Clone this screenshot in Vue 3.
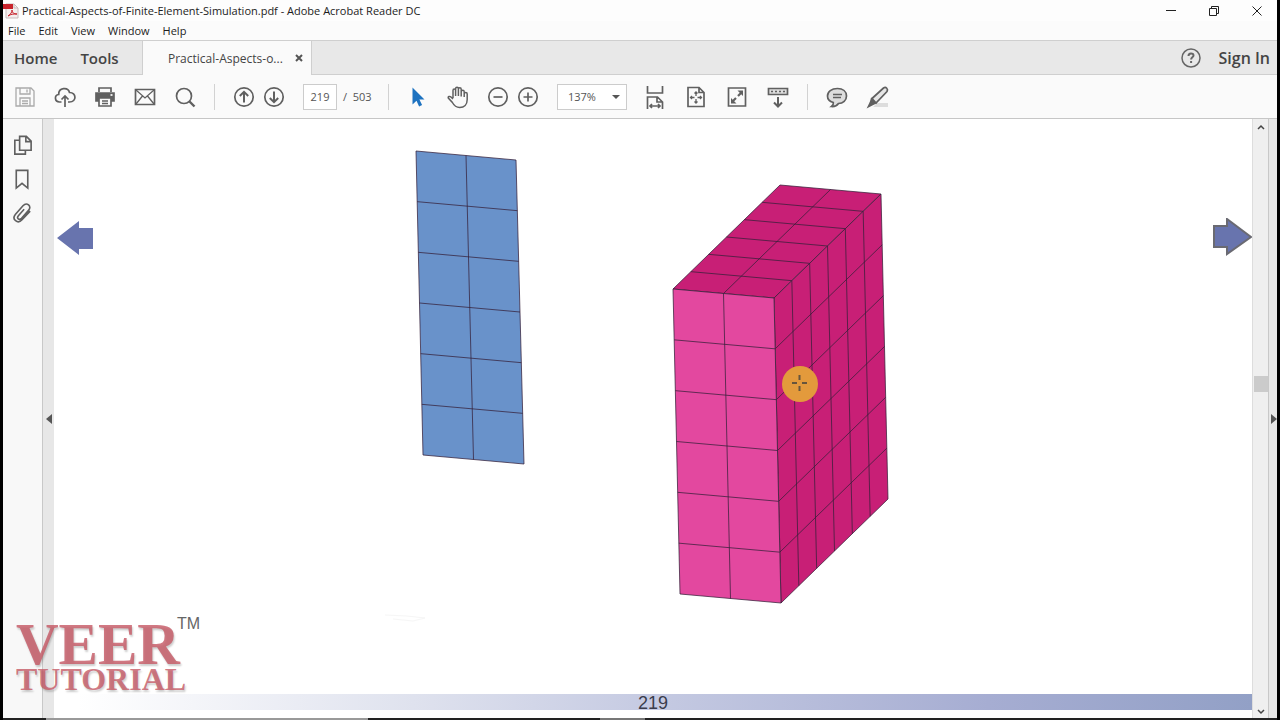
<script setup>
import { ref } from "vue";

const menus = ["File", "Edit", "View", "Window", "Help"];
const page = ref("219");
const zoom = ref("137%");

// corners go clockwise from the top left one
const faces = [
  { name: "plate", points: [[416, 151], [516, 160], [524, 464], [423, 455]], cols: 2, rows: 6 },
  { name: "top", points: [[780, 185], [881, 194], [774, 298], [673, 289]], cols: 2, rows: 6 },
  { name: "side", points: [[774, 298], [881, 194], [888, 499], [781, 603]], cols: 6, rows: 6 },
  { name: "front", points: [[673, 289], [774, 298], [781, 603], [680, 594]], cols: 2, rows: 6 },
];

function between(a, b, t) {
  return [a[0] + (b[0] - a[0]) * t, a[1] + (b[1] - a[1]) * t];
}

function meshPath(face) {
  const [tl, tr, br, bl] = face.points;
  let d = "";
  for (let i = 1; i < face.cols; i++) {
    const t = i / face.cols;
    d += `M${between(tl, tr, t)}L${between(bl, br, t)}`;
  }
  for (let i = 1; i < face.rows; i++) {
    const t = i / face.rows;
    d += `M${between(tl, bl, t)}L${between(tr, br, t)}`;
  }
  return d;
}
</script>

<template>
  <div class="window">
    <header class="title-bar">
      <svg class="app-icon" width="16" height="18" viewBox="0 0 16 18">
        <path d="M3 2h8l4 4v10H3z" fill="#f4eeee" stroke="#c9bcbc" />
        <path d="M11 2v4h4" fill="none" stroke="#c9bcbc" />
        <rect x="0" y="2" width="10" height="5" fill="#c8232c" />
        <path d="M5 14c3-2 4-4 4-6 0 3 2 4 5 4-4 0-6 0-9 2z" fill="none" stroke="#c8232c" />
      </svg>
      <h1>Practical-Aspects-of-Finite-Element-Simulation.pdf - Adobe Acrobat Reader DC</h1>
      <div class="window-buttons">
        <button aria-label="Minimize">
          <svg width="12" height="12" viewBox="0 0 12 12"><path d="M1 5.500h10" /></svg>
        </button>
        <button aria-label="Restore">
          <svg width="12" height="12" viewBox="0 0 12 12"><path d="M1.500 3.500h7v7h-7zM3.500 3.500v-2h7v7h-2" /></svg>
        </button>
        <button aria-label="Close">
          <svg width="12" height="12" viewBox="0 0 12 12"><path d="M1.500 1.500l9 9M10.500 1.500l-9 9" /></svg>
        </button>
      </div>
    </header>

    <nav class="menu-bar">
      <button v-for="menu in menus" :key="menu">{{ menu }}</button>
    </nav>

    <div class="tabs">
      <div class="main-tabs">
        <button>Home</button>
        <button>Tools</button>
      </div>
      <div class="file-tab">
        <span>Practical-Aspects-o...</span>
        <button aria-label="Close tab">
          <svg width="8" height="8" viewBox="0 0 8 8"><path d="M1 1l6 6M7 1l-6 6" /></svg>
        </button>
      </div>
      <div class="account">
        <button class="help" aria-label="Help">
          <svg width="20" height="20" viewBox="0 0 20 20">
            <circle cx="10" cy="10" r="9" />
            <path d="M7.500 8c0-3.500 5-3.300 5-.5 0 1.900-2.400 1.800-2.400 4M10.100 13v2" stroke-width="2" />
          </svg>
        </button>
        <button class="sign-in">Sign In</button>
      </div>
    </div>

    <div class="toolbar">
      <div class="group">
        <button class="disabled" aria-label="Save">
          <svg viewBox="0 0 24 24">
            <path d="M3 3h15l3 3v15H3z" /><path d="M7 3v6h10V3M14 4.500v3M7 21v-8h10v8M9 16h6M9 18.500h6" />
          </svg>
        </button>
        <button aria-label="Upload">
          <svg viewBox="0 0 24 24">
            <path d="M8.500 17H6.500c-5 0-5.500-7-.8-7.500C5.500 2.500 15 1.500 16.500 7.500c7-.2 7.500 9.500 0 9.500H15" />
            <path d="M12 22V11M8.500 14.500L12 11l3.500 3.500" />
          </svg>
        </button>
        <button aria-label="Print">
          <svg viewBox="0 0 24 24">
            <path d="M6 7V3h12v4" />
            <path d="M3 8h18v8h-3v-3H6v3H3z" fill="#606060" />
            <path d="M6 13h12v8H6z" fill="#fafafa" /><path d="M9 16h6M9 18.500h6" stroke-width="1.300" />
            <path d="M17.500 10h2" stroke="#fff" />
          </svg>
        </button>
        <button aria-label="Email">
          <svg viewBox="0 0 24 24">
            <path d="M2.500 4.500h19v15h-19z" />
            <path d="M3 5l9 8 9-8M3 19l6.500-8M21 19l-6.500-8" stroke-width="1.300" />
          </svg>
        </button>
        <button aria-label="Search">
          <svg viewBox="0 0 24 24"><circle cx="11" cy="11" r="7.500" /><path d="M16.500 16.500l5 5" stroke-width="2.400" /></svg>
        </button>
      </div>
      <span class="divider"></span>
      <div class="group tight">
        <button aria-label="Previous page">
          <svg viewBox="0 0 24 24"><circle cx="12" cy="12" r="9.200" /><path d="M12 17.500V7M7.800 11L12 6.800l4.200 4.200" stroke-width="2" /></svg>
        </button>
        <button aria-label="Next page">
          <svg viewBox="0 0 24 24"><circle cx="12" cy="12" r="9.200" /><path d="M12 6.500V17M7.800 13l4.200 4.200 4.200-4.200" stroke-width="2" /></svg>
        </button>
      </div>
      <label class="page-field">
        <input v-model="page" type="text" aria-label="Page number" />
        <span>/&nbsp; 503</span>
      </label>
      <span class="divider"></span>
      <div class="group">
        <button aria-label="Select">
          <svg viewBox="0 0 24 24"><path d="M6.500 2.500v17l4-3.800 2.600 5.800 3-1.400-2.700-5.600h5.100z" class="pointer" /></svg>
        </button>
        <button aria-label="Pan">
          <svg viewBox="0 0 24 24">
            <path d="M7 13V5.500c0-2 2.600-2 2.600 0V11M9.600 11V3.700c0-2 2.800-2 2.800 0V11M12.400 11V4.300c0-2 2.800-2 2.800 0V11.500M15.200 11.500V6.700c0-2 3-2 3 0V12M18.200 9c0-2 3-2 3 0v5.500c0 5-3 8-7.500 8-4 0-5.800-2.200-7.300-5L2.300 13c-.6-1.800 1.700-2 2.700-1L7 14" stroke-width="1.500" />
          </svg>
        </button>
      </div>
      <div class="group tight zoom-buttons">
        <button aria-label="Zoom out">
          <svg viewBox="0 0 24 24"><circle cx="12" cy="12" r="9.200" /><path d="M7.500 12h9" /></svg>
        </button>
        <button aria-label="Zoom in">
          <svg viewBox="0 0 24 24"><circle cx="12" cy="12" r="9.200" /><path d="M7.500 12h9M12 7.500v9" /></svg>
        </button>
      </div>
      <div class="zoom-field">
        <select v-model="zoom" aria-label="Zoom level">
          <option>100%</option>
          <option>137%</option>
          <option>150%</option>
        </select>
      </div>
      <div class="group wide">
        <button aria-label="Fit width">
          <svg viewBox="0 0 24 24">
            <path d="M4.500 1v7h15V1M4.500 24V12h10l5 5v7M14 12v5h5M7 21h10M9 19l-2 2 2 2M15 19l2 2-2 2" />
          </svg>
        </button>
        <button aria-label="Fit page">
          <svg viewBox="0 0 24 24">
            <path d="M4 2.500h11l5 5v14H4zM15 2.500v5h5" />
            <path d="M12 7v4M12 14v4M6.500 12.500h4M13.500 12.500h4M10.500 8.500L12 7l1.500 1.500M10.500 16.500L12 18l1.500-1.500M8 11l-1.500 1.500L8 14M16 11l1.500 1.500L16 14" stroke-width="1.300" />
          </svg>
        </button>
        <button aria-label="Full screen">
          <svg viewBox="0 0 24 24">
            <path d="M3.500 3h17v18h-17z" /><path d="M13 11l4-4M11 13l-4 4" stroke-width="2.200" />
            <path d="M12.500 5.500H18V11zM6 13v5.500h5.500z" fill="#606060" stroke="none" />
          </svg>
        </button>
        <button aria-label="Read mode">
          <svg viewBox="0 0 24 24">
            <path d="M2.500 3.500h19v6h-19z" fill="#ddd" /><path d="M5 6.500h14" stroke-dasharray="2 2" />
            <path d="M12 12v9M8 17.500l4 4 4-4" stroke-width="2" />
          </svg>
        </button>
      </div>
      <span class="divider"></span>
      <div class="group wide">
        <button aria-label="Comment">
          <svg viewBox="0 0 24 24">
            <path d="M12.500 3.500c5.500 0 9 3 9 7.500s-3.500 7.500-8 7.500c-1.300 2-4 3.200-7 3 1.300-1 2-2.600 1.800-4C4.800 16.500 2.500 14.300 2.500 11c0-4.500 4-7.500 10-7.500z" fill="#ddd" />
            <path d="M8 9.500h9M8 12.500h8" stroke-width="1.300" />
          </svg>
        </button>
        <button aria-label="Highlight">
          <svg viewBox="0 0 24 24">
            <path d="M11 18h11v4H7z" fill="#ddd" stroke="none" />
            <path d="M6 13.500L17.500 3c2.500-1.500 5 1 3.500 3.500L10 18z" fill="#e6e6e6" />
            <path d="M5.500 14l4 4-3 1.500-4 2 2-4z" fill="#606060" />
          </svg>
        </button>
      </div>
    </div>

    <main class="workspace">
      <aside class="side-panel">
        <button aria-label="Page thumbnails">
          <svg viewBox="0 0 24 24">
            <path d="M9 2.500h7l5 5V17H9zM15.500 2.500V8H21" /><path d="M9 6.500H4v14.500h11v-4" />
          </svg>
        </button>
        <button aria-label="Bookmarks">
          <svg viewBox="0 0 24 24"><path d="M5.500 2.500h12v18.500l-6-5-6 5z" /></svg>
        </button>
        <button aria-label="Attachments">
          <svg viewBox="0 0 24 24">
            <path d="M20 9.500l-8.500 9c-4.500 5-11-.5-7-5.500l8-9c4-4.500 9.500.5 6 4.500l-7.500 8.500c-2.500 2.500-5.500 0-3.300-2.700l6-6.800" />
          </svg>
        </button>
      </aside>
      <button class="splitter" aria-label="Toggle navigation pane">
        <svg width="6" height="10" viewBox="0 0 6 10"><path d="M6 0v10L0 5z" /></svg>
      </button>

      <section class="page">
        <div class="page-body">
          <button class="turn" aria-label="Previous">
            <svg width="36" height="36" viewBox="0 0 36 36"><path d="M0 18L22 1v7h14v21H22v6z" /></svg>
          </button>
          <svg class="figure" viewBox="93 119 1120 574">
            <g v-for="face in faces" :key="face.name" :class="face.name">
              <polygon :points="face.points.join(' ')" />
              <path :d="meshPath(face)" />
            </g>
            <path class="trace" d="M385 615l22 1 18 2-12 3-20-2" />
            <g class="marker">
              <circle cx="800" cy="384" r="18" />
              <path d="M792 383h5M802 383h5M799.500 375v5M799.500 386v5" />
            </g>
          </svg>
          <button class="turn next" aria-label="Next">
            <svg width="39" height="38" viewBox="0 0 39 38"><path d="M1 8h13V1l24 18-24 17v-7H1z" /></svg>
          </button>
        </div>
        <footer class="page-footer">219</footer>
      </section>

      <div class="scrollbar">
        <svg width="8" height="6" viewBox="0 0 8 6"><path d="M1 5l3-3 3 3" /></svg>
        <span class="track-above"></span>
        <span class="thumb"></span>
        <span class="track-below"></span>
        <svg width="8" height="6" viewBox="0 0 8 6"><path d="M1 1l3 3 3-3" /></svg>
      </div>
      <button class="splitter right" aria-label="Toggle tools pane">
        <svg width="6" height="10" viewBox="0 0 6 10"><path d="M0 0v10l6-5z" /></svg>
      </button>
    </main>

    <div class="taskbar-edge"></div>

    <div class="watermark">
      <div class="brand">
        <strong>VEER</strong>
        <span>TUTORIAL</span>
      </div>
      <sup>TM</sup>
    </div>
  </div>
</template>

<style>
body {
  margin: 0;
  background: #000;
}
</style>

<style scoped>
.window {
  position: relative;
  box-sizing: border-box;
  min-height: 100vh;
  border-left: 3px solid #000;
  border-right: 3px solid #000;
  display: flex;
  flex-direction: column;
  background: #fff;
  font-family: "Open Sans", "Noto Sans", sans-serif;
  color: #1c1c1c;
}

button {
  padding: 0;
  border: none;
  background: transparent;
  font: inherit;
  color: inherit;
}
button svg {
  display: block;
}

.title-bar {
  height: 21px;
  display: flex;
  align-items: center;
  background: #fdfdfd;
}
.app-icon {
  margin-right: 3px;
}
.title-bar h1 {
  flex: 1;
  margin: 0;
  font-size: 11px;
  line-height: 20px;
  font-weight: normal;
}
.window-buttons {
  display: flex;
  gap: 31px;
  padding-right: 14px;
}
.window-buttons path {
  fill: none;
  stroke: #222;
}

.menu-bar {
  height: 19px;
  display: flex;
  gap: 13px;
  padding-left: 5px;
  background: #fbfbfb;
  font-size: 11px;
}

.tabs {
  display: flex;
  height: 34px;
  border-top: 1px solid #cfcfcf;
  background: #e8e8e8;
  color: #444;
}
.main-tabs {
  box-sizing: border-box;
  width: 140px;
  display: flex;
  gap: 23px;
  padding-left: 11px;
  border-right: 1px solid #cfcfcf;
  border-bottom: 1px solid #cfcfcf;
  font-size: 15px;
  font-weight: 600;
}
.file-tab {
  box-sizing: border-box;
  width: 169px;
  display: flex;
  align-items: center;
  justify-content: space-between;
  padding: 0 8px 0 25px;
  border-right: 1px solid #cfcfcf;
  background: #fafafa;
  font-size: 12px;
}
.file-tab path {
  stroke: #555;
  stroke-width: 2;
}
.account {
  flex: 1;
  display: flex;
  justify-content: flex-end;
  align-items: center;
  gap: 18px;
  padding-right: 7px;
  border-bottom: 1px solid #cfcfcf;
}
.help svg {
  fill: none;
  stroke: #666;
  stroke-width: 1.5;
}
.sign-in {
  font-size: 16px;
  font-weight: 600;
}

.toolbar {
  height: 43px;
  display: flex;
  align-items: center;
  padding-left: 10px;
  border-bottom: 1px solid #c6c6c6;
  background: #fafafa;
}
.group {
  display: flex;
  gap: 16px;
}
.group.tight {
  gap: 6px;
}
.group.wide {
  gap: 17px;
}
.group svg,
.side-panel svg {
  width: 24px;
  height: 24px;
  fill: none;
  stroke: #606060;
  stroke-width: 1.7;
}
.group .disabled svg {
  stroke: #aaa;
  stroke-width: 1.3;
}
.group .pointer {
  fill: #1d72c0;
  stroke: none;
}
.divider {
  width: 1px;
  height: 26px;
  margin: 0 17px;
  background: #d2d2d2;
}
.page-field {
  display: flex;
  align-items: center;
  width: 68px;
  margin-left: 17px;
  color: #555;
}
.page-field input {
  box-sizing: border-box;
  width: 34px;
  height: 26px;
  margin-right: 6px;
  padding: 0;
  border: 1px solid #ccc;
  background: #fff;
  font: 11px "Open Sans", "Noto Sans", sans-serif;
  color: #555;
  text-align: center;
}
.page-field span {
  font-size: 11px;
  white-space: nowrap;
}
.zoom-buttons {
  margin-left: 16px;
}
.zoom-field {
  position: relative;
  margin: 0 16px 0 17px;
}
.zoom-field select {
  display: block;
  appearance: none;
  width: 70px;
  height: 26px;
  padding: 0 10px;
  border: 1px solid #ccc;
  border-radius: 0;
  background: #fff;
  font: 11px "Open Sans", "Noto Sans", sans-serif;
  color: #555;
}
.zoom-field::after {
  content: "";
  position: absolute;
  top: 11px;
  right: 7px;
  border: 4px solid transparent;
  border-top-color: #555;
  border-bottom: none;
  pointer-events: none;
}

.workspace {
  flex: 1;
  display: flex;
}
.side-panel {
  width: 39px;
  display: flex;
  flex-direction: column;
  align-items: center;
  gap: 11px;
  padding-top: 15px;
  background: #f8f8f8;
}
.side-panel svg {
  width: 23px;
  height: 23px;
}
.splitter {
  box-sizing: border-box;
  width: 12px;
  display: flex;
  align-items: center;
  justify-content: center;
  border-left: 1px solid #c8c8c8;
  background: #e7e7e7;
}
.splitter path {
  fill: #555;
}
.splitter.right {
  width: 9px;
  justify-content: flex-end;
}

.page {
  flex: 1;
  min-width: 0;
  display: flex;
  flex-direction: column;
  padding-bottom: 8px;
  background: #fff;
}
.page-body {
  flex: 1;
  display: flex;
  align-items: flex-start;
}
.turn {
  padding: 101px 0 0 3px;
}
.turn.next {
  padding: 99px 0 0;
}
.turn path {
  fill: #6874ae;
}
.turn.next path {
  stroke: #6a6a72;
  stroke-width: 2;
}
.figure {
  flex: 1;
  min-width: 0;
}
.plate {
  fill: #6992ca;
}
.top,
.side {
  fill: #c81f76;
}
.front {
  fill: #e3489f;
}
.figure polygon,
.figure g path {
  stroke: #35203a;
  stroke-opacity: 0.75;
}
.trace {
  fill: none;
  stroke: #f6f6f6;
}
.marker circle {
  fill: #e39a3c;
}
.figure .marker path {
  stroke: #3d3d3d;
  stroke-width: 2;
}
.page-footer {
  height: 16px;
  background: linear-gradient(to right, #fff 2%, #dfe2ee 30%, #c5cae2 50%, #a6add2 78%, #92a0c6);
  font: 18px/18px "Liberation Sans", Arial, sans-serif;
  color: #3b3d4c;
  text-align: center;
}

.scrollbar {
  box-sizing: border-box;
  width: 16px;
  display: flex;
  flex-direction: column;
  align-items: center;
  padding: 5px 0 3px;
  border-left: 1px solid #ddd;
  background: #efefef;
}
.scrollbar path {
  fill: none;
  stroke: #444;
  stroke-width: 1.5;
}
.thumb {
  width: 14px;
  height: 16px;
  background: #cbcbcb;
}
.track-above {
  flex: 45;
}
.track-below {
  flex: 58;
}

.taskbar-edge {
  height: 2px;
  background: linear-gradient(to right, #222 43px, #999 43px, #999 365px, #222 365px, #222 597px, #777 597px, #777 642px, #222 642px);
}

/* sits over the page corner */
.watermark {
  position: absolute;
  left: 13px;
  bottom: 28px;
  display: flex;
  align-items: flex-start;
  pointer-events: none;
}
.brand {
  display: flex;
  flex-direction: column;
  width: 161px;
  padding-top: 6px;
  font-family: "Liberation Serif", "Times New Roman", serif;
  font-weight: bold;
  color: rgba(197, 88, 100, 0.8);
  text-shadow: 1px 2px 2px rgba(0, 0, 0, 0.2);
}
.brand strong {
  font-size: 59px;
  line-height: 44px;
}
.brand span {
  font-size: 32px;
  line-height: 26px;
}
.watermark sup {
  font: 16px/16px "Liberation Sans", Arial, sans-serif;
  color: #666;
}
</style>
